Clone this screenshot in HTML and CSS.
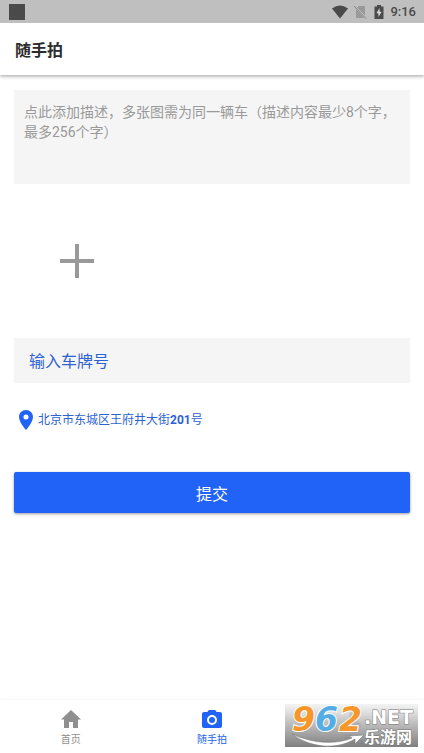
FILE: index.html
```html
<!DOCTYPE html>
<html lang="zh-CN">
<head>
<meta charset="utf-8">
<meta name="viewport" content="width=device-width, initial-scale=1">
<title>随手拍</title>
<link rel="stylesheet" href="styles.css">
</head>
<body>
<div class="status">
  <span class="status-app"></span>
  <svg class="status-icon" viewBox="0 0 16 16" width="16" height="16" aria-hidden="true"><path fill="#4a4a4a" d="M8 14.500L0 4.500Q8-1.500 16 4.500Z"/></svg>
  <svg class="status-icon" viewBox="0 0 14 16" width="14" height="16" aria-hidden="true"><path fill="#999" d="M5 2H11V11.500L3 3.500ZM2 5L10.500 14H2Z"/><path d="M0 2L12 14.500" stroke="#868686" stroke-width="1"/></svg>
  <svg class="status-icon" viewBox="0 0 10 16" width="10" height="16" aria-hidden="true"><path fill="#4a4a4a" d="M3 1H7V2.500H9.500V15H.500V2.500H3Z"/><path fill="#ddd" d="M5.500 4L2.500 9.200H4.500V13L7.600 7.800H5.500Z"/></svg>
  <span class="status-time">9:16</span>
</div>
<header class="bar"><h1 class="bar-title">随手拍</h1></header>
<main class="content">
  <form class="form">
    <textarea class="description" aria-label="描述" placeholder="点此添加描述，多张图需为同一辆车（描述内容最少8个字，最多256个字）"></textarea>
    <button class="add" type="button" aria-label="添加图片">
      <svg viewBox="0 0 34 34" width="34" height="34" aria-hidden="true"><path fill="#999" d="M15 0H19V15H34V19H19V34H15V19H0V15H15Z"/></svg>
    </button>
    <input class="plate" type="text" aria-label="车牌号" placeholder="输入车牌号">
    <div class="location">
      <svg viewBox="0 0 14 20" width="14" height="20" aria-hidden="true"><path fill="#2163f6" fill-rule="evenodd" d="M7 0C3.100 0 0 3.100 0 7C0 12.200 7 20 7 20S14 12.200 14 7C14 3.100 10.900 0 7 0ZM7 4.500A2.500 2.500 0 1 1 7 9.500A2.500 2.500 0 1 1 7 4.500Z"/></svg>
      <span>北京市东城区王府井大街<b class="number">201</b>号</span>
    </div>
    <button class="submit" type="submit">提交</button>
  </form>
</main>
<nav class="tabs">
  <a class="tab" href="#home">
    <svg viewBox="0 0 20 18" width="20" height="18" aria-hidden="true"><path fill="#8f8f8f" d="M10 0L20 9.500H17V18H12V12H8V18H3V9.500H0Z"/></svg>
    <span>首页</span>
  </a>
  <a class="tab tab-active" href="#snap">
    <svg viewBox="0 0 20 18" width="20" height="18" aria-hidden="true"><path fill="#2163f6" d="M7 0H13L14.800 2H18Q20 2 20 4V16Q20 18 18 18H2Q0 18 0 16V4Q0 2 2 2H5.200Z"/><circle cx="10" cy="10" r="4" fill="none" stroke="#fff" stroke-width="2"/></svg>
    <span>随手拍</span>
  </a>
  <a class="tab" href="#mine">
    <svg viewBox="0 0 20 18" width="20" height="18" aria-hidden="true"><path fill="#8f8f8f" d="M10 1A4 4 0 1 1 10 9A4 4 0 1 1 10 1ZM2 17V15Q3 11 10 11T18 15V17Z"/></svg>
    <span>我的</span>
  </a>
</nav>
<svg class="watermark" viewBox="0 0 133 43" width="133" height="43" role="img" aria-label="962.NET 乐游网">
  <defs>
    <linearGradient id="shade" x1="0" y1="0" x2="0" y2="1"><stop offset="0" stop-color="#eee" stop-opacity=".7"/><stop offset=".4" stop-color="#bcbcbc" stop-opacity=".88"/><stop offset="1" stop-color="#747474" stop-opacity=".92"/></linearGradient>
  </defs>
  <path fill="url(#shade)" d="M0 0H133V43H0Z"/>
  <path d="M7 30C24 43 50 47 70 35L70 40L79 31L64 32L67 34C47 42 25 38 7 30Z" fill="#fff" stroke="#777" stroke-width=".6"/>
  <g class="digits">
    <text x="7" y="27" fill="#f5972b">9</text>
    <text x="30" y="27" fill="#55ade5">6</text>
    <text x="54" y="27" fill="#f5972b">2</text>
  </g>
  <text class="domain" x="79" y="20">.NET</text>
  <text class="site" x="79" y="39">乐游网</text>
</svg>
</body>
</html>
```
FILE: styles.css
```css
* {
  box-sizing: border-box;
}

body {
  margin: 0;
  min-height: 100vh;
  display: flex;
  flex-direction: column;
  background: #fff;
  font-family: Roboto, "Noto Sans CJK SC", sans-serif;
  color: #2c2c2c;
}

button,
input,
textarea {
  border: 0;
  border-radius: 0;
  font-family: inherit;
}

.status {
  display: flex;
  align-items: center;
  height: 23px;
  padding: 0 8px;
  background: #bfbfbf;
}

.status-app {
  width: 16px;
  height: 16px;
  margin: 0 auto 0 1px;
  background: #4a4a4a;
}

.status-icon {
  margin-right: 6px;
}

.status-time {
  font-size: 13px;
  font-weight: 500;
  color: #4a4a4a;
}

.bar {
  display: flex;
  align-items: center;
  height: 52px;
  padding: 4px 15px 0;
  box-shadow: 0 1px 4px rgba(0, 0, 0, 0.4);
  clip-path: inset(0 0 -8px 0);
}

.bar-title {
  margin: 0;
  font-size: 16px;
  line-height: 24px;
  font-weight: 700;
}

.content {
  flex: 1;
  padding: 15px 14px;
}

.form {
  display: flex;
  flex-direction: column;
}

.description {
  width: 100%;
  height: 94px;
  padding: 12px 10px;
  background: #f5f5f5;
  font-size: 14px;
  line-height: 20px;
  resize: none;
}

.description::placeholder {
  color: #999;
}

.add {
  display: flex;
  align-items: center;
  justify-content: center;
  align-self: flex-start;
  width: 126px;
  height: 126px;
  margin: 14px 0;
  padding: 0;
  background: none;
}

.plate {
  width: 100%;
  height: 45px;
  padding: 2px 15px 0;
  background: #f5f5f5;
  font-size: 16px;
  color: #2d62d4;
}

.plate::placeholder {
  color: #2d62d4;
}

.location {
  display: flex;
  align-items: center;
  gap: 5px;
  height: 20px;
  margin: 27px 5px 42px;
  font-size: 12px;
  line-height: 20px;
  color: #2d62d4;
}

.number {
  font-weight: 700;
}

.submit {
  height: 41px;
  padding: 0;
  border-radius: 2px;
  background: #2163f6;
  box-shadow: 0 1px 3px rgba(0, 0, 0, 0.4);
  color: #fff;
  font-size: 16px;
}

.tabs {
  display: flex;
  height: 53px;
  box-shadow: 0 -1px 2px rgba(0, 0, 0, 0.04);
}

.tab {
  flex: 1;
  display: flex;
  flex-direction: column;
  align-items: center;
  gap: 4px;
  padding-top: 10px;
  color: #8f8f8f;
  font-size: 10px;
  line-height: 16px;
  text-decoration: none;
}

.tab-active {
  color: #2163f6;
}

.watermark {
  position: absolute;
  right: 6px;
  bottom: 6px;
  overflow: visible;
  pointer-events: none;
}

.digits {
  font: italic 700 33px "DejaVu Sans", sans-serif;
  stroke: #fff;
  stroke-width: 2px;
  paint-order: stroke;
}

.domain,
.site {
  fill: #fff;
  stroke: #777;
  stroke-width: 1px;
  paint-order: stroke;
}

.domain {
  font: 700 19px "DejaVu Sans", sans-serif;
}

.site {
  font: 700 16px "Noto Sans CJK SC", sans-serif;
}
```
